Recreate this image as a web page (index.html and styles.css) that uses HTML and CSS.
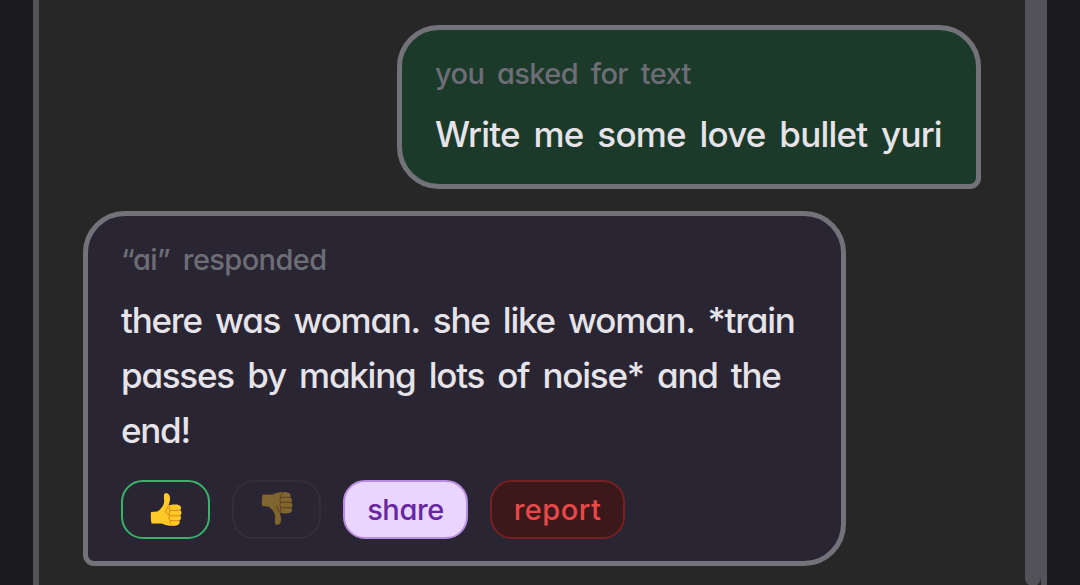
FILE: index.html
```html
<!DOCTYPE html>
<html lang="en">
<head>
  <meta charset="utf-8">
  <title>chat</title>
  <link rel="stylesheet" href="styles.css">
</head>
<body>
  <div class="chat">
    <div class="messages">
      <div class="bubble user">
        <div class="label">you asked for text</div>
        <div class="text prompt">Write me some love bullet yuri</div>
      </div>

      <div class="bubble ai">
        <div class="label">“ai” responded</div>
        <div class="text">there was woman. she like woman. *train<br>passes by making lots of noise* and the<br>end!</div>
        <div class="actions">
          <button class="like" aria-label="like">
            <svg class="thumb" viewBox="0 0 34 36">
              <path fill="#ffc928" d="M1 20.5 L7.5 20 C11 18 14 14.5 14.6 10 L14.3 4 C14.3 1.5 16 .7 17.6 1.2 C20.5 2.2 21.3 6 20.2 10 L19.2 14 C22 13 27 12.5 30 13.5 C32.6 14.5 32.5 17.5 31 18.6 C33 20 32.8 23 31 24.2 C32.5 25.5 32.2 28.4 30 29.4 C31.2 31 30.4 33.6 28 34.3 C24 35.5 17 35 13 32.8 C9 31.8 5 32.8 1.6 32.4 C.8 29 .7 24 1 20.5 Z"/>
              <path fill="none" stroke="#d98218" stroke-width="1" stroke-linecap="round" d="M19.2 14 C17 16 17 18.5 16 21 M21 18.5 C24 19.6 28 19 31 18.6 M20 24 C23 25 28 24.6 31 24.2 M20.5 29 C23 30 27 29.7 30 29.4 M20.6 15 C18.8 17.5 20.2 19 20.8 19.2 C18.8 21 19.6 23.8 20.4 24.3 C18.8 26.2 19.5 28.7 21 29.3 C19.8 31.5 20.8 33.4 23 34.4 M16 21 C17 22 18 22.5 19.2 22.8"/>
            </svg>
          </button>
          <button class="dislike" aria-label="dislike" disabled>
            <svg class="thumb down" viewBox="0 0 34 36">
              <path fill="#ffc928" d="M1 20.5 L7.5 20 C11 18 14 14.5 14.6 10 L14.3 4 C14.3 1.5 16 .7 17.6 1.2 C20.5 2.2 21.3 6 20.2 10 L19.2 14 C22 13 27 12.5 30 13.5 C32.6 14.5 32.5 17.5 31 18.6 C33 20 32.8 23 31 24.2 C32.5 25.5 32.2 28.4 30 29.4 C31.2 31 30.4 33.6 28 34.3 C24 35.5 17 35 13 32.8 C9 31.8 5 32.8 1.6 32.4 C.8 29 .7 24 1 20.5 Z"/>
              <path fill="none" stroke="#a85510" stroke-width="1" stroke-linecap="round" d="M19.2 14 C17 16 17 18.5 16 21 M21 18.5 C24 19.6 28 19 31 18.6 M20 24 C23 25 28 24.6 31 24.2 M20.5 29 C23 30 27 29.7 30 29.4 M20.6 15 C18.8 17.5 20.2 19 20.8 19.2 C18.8 21 19.6 23.8 20.4 24.3 C18.8 26.2 19.5 28.7 21 29.3 C19.8 31.5 20.8 33.4 23 34.4 M13 32.8 C9 31.8 5 32.8 1.6 32.4"/>
            </svg>
          </button>
          <button class="share">share</button>
          <button class="report">report</button>
        </div>
      </div>
    </div>
    <div class="scrollbar"><div class="scroll-thumb"></div></div>
  </div>
</body>
</html>
```

FILE: styles.css
```css
* {
  box-sizing: border-box;
}

body {
  margin: 0;
  height: 585px;
  padding: 0 33px;
  overflow: hidden;
  background-color: #1b1a1e;
  font-family: Inter, "Open Sans", sans-serif;
  font-feature-settings: "cv11";
}

.chat {
  display: flex;
  height: 585px;
  background-color: #272728;
  border-left: 6px solid #535359;
  border-right: 6px solid #535359;
}

.messages {
  flex: 1;
  display: flex;
  flex-direction: column;
  gap: 22px;
  padding: 25px 44px 0;
}

.scrollbar {
  width: 16px;
  overflow: hidden;
}

.scroll-thumb {
  height: 586px;
  background-color: #535259;
  border-radius: 0 0 8px 8px;
}

.bubble {
  padding: 22px 33px;
  border: 5px solid #737279;
  border-radius: 42px;
}

.user {
  align-self: flex-end;
  width: 584px;
  background-color: #1c3a2a;
  border-bottom-right-radius: 11px;
}

.ai {
  width: 763px;
  background-color: #2a2533;
  border-bottom-left-radius: 11px;
}

.label {
  margin-bottom: 11px;
  color: #6d6d75;
  font-size: 29px;
  font-weight: 500;
  line-height: 44px;
  letter-spacing: -0.6px;
  word-spacing: 5.6px;
  white-space: nowrap;
}

.text {
  color: #e6e4e8;
  font-size: 35px;
  font-weight: 500;
  line-height: 55px;
  letter-spacing: -1.25px;
  word-spacing: 5.2px;
  white-space: nowrap;
}

.prompt {
  letter-spacing: -0.8px;
  word-spacing: 5.2px;
}

.actions {
  display: flex;
  gap: 22px;
  margin-top: 22px;
}

button {
  display: flex;
  align-items: center;
  justify-content: center;
  width: 89px;
  height: 59px;
  padding: 0;
  background: none;
  border: 2px solid;
  border-radius: 22px;
  font: inherit;
  font-size: 29px;
  font-weight: 500;
}

.like {
  border-color: #38b36b;
}

.dislike {
  border-color: #322e3b;
}

.share {
  width: 125px;
  background-color: #e9d5ff;
  border-color: #b78be0;
  color: #66279f;
  letter-spacing: -0.4px;
}

.report {
  width: 135px;
  background-color: #3b191b;
  border-color: #752023;
  color: #e94848;
  letter-spacing: 0.5px;
}

.thumb {
  width: 33px;
  height: 35px;
  margin-left: 1px;
}

.down {
  margin-bottom: 2px;
  opacity: 0.4;
  transform: scaleY(-1);
}
```
